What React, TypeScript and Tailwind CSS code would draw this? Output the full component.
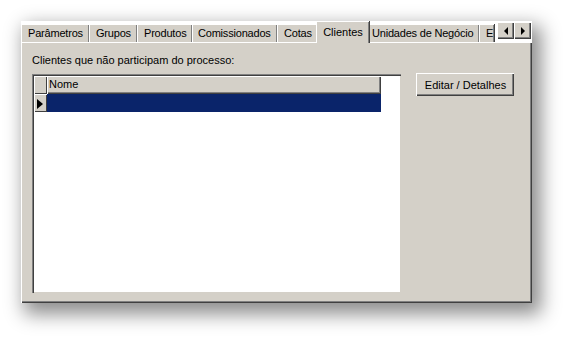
import React from "react";

const font = { fontFamily: '"Liberation Sans", Arial, sans-serif' };

function Tab({ label, w, active, pl = 6 }: { label: string; w: number; active?: boolean; pl?: number }) {
  if (active) {
    return (
      <div
        className="relative z-10 -mx-[2px] flex h-[22px] items-start justify-center border-l border-t border-white bg-[#d4d0c8] pt-[2px] shadow-[inset_-1px_0_0_#808080,1px_0_0_#404040]"
        style={{ width: w + 4 }}
      >
        {label}
      </div>
    );
  }
  return (
    <div
      className="mt-[3px] flex h-[18px] items-center overflow-hidden whitespace-nowrap border-l border-t border-white bg-[#d4d0c8] tracking-[-0.2px] shadow-[inset_-1px_0_0_#808080,1px_0_0_#404040]"
      style={{ width: w, paddingLeft: pl }}
    >
      {label}
    </div>
  );
}

function ArrowBtn({ dir }: { dir: "l" | "r" }) {
  return (
    <div className="flex h-[17px] w-[17px] items-center justify-center border-l border-t border-white bg-[#d4d0c8] shadow-[inset_-1px_-1px_0_#404040,inset_-2px_-2px_0_#808080]">
      <svg width="4" height="8" viewBox="0 0 4 8">
        {dir === "l" ? <path d="M4 0 L0 4 L4 8 Z" fill="#000" /> : <path d="M0 0 L4 4 L0 8 Z" fill="#000" />}
      </svg>
    </div>
  );
}

export default function App() {
  return (
    <div className="h-[346px] w-[574px] overflow-hidden bg-white pl-[21px] pt-[21px] text-[11px] text-black" style={font}>
      <div className="flex h-[282px] w-[511px] flex-col bg-[#d4d0c8] shadow-[6px_8px_18px_3px_rgba(0,0,0,0.45)]">
        {/* tab strip */}
        <div className="relative flex h-[21px] bg-white">
          <div className="flex h-[22px] items-start">
            <Tab label="Parâmetros" w={68} />
            <Tab label="Grupos" w={48} />
            <Tab label="Produtos" w={55} />
            <Tab label="Comissionados" w={85} pl={5} />
            <Tab label="Cotas" w={41} />
            <Tab label="Clientes" w={49} active />
            <Tab label="Unidades de Negócio" w={112} pl={4} />
            <Tab label="E" w={15} />
          </div>
          <div className="absolute right-[1px] top-[1px] z-20 flex">
            <ArrowBtn dir="l" />
            <ArrowBtn dir="r" />
          </div>
        </div>
        {/* panel */}
        <div className="flex flex-1 flex-col border-l border-t border-white shadow-[inset_-1px_-1px_0_#404040,inset_-2px_-2px_0_#808080]">
          <div className="flex">
            <div className="flex flex-col pl-[10px] pt-[10px]">
              <div className="h-[14px] leading-[14px]">Clientes que não participam do processo:</div>
              <div className="mt-[7px] flex h-[219px] w-[369px] flex-col border-l border-t border-[#808080] bg-white shadow-[inset_1px_1px_0_#404040,inset_-1px_-1px_0_#d4d0c8] pl-[1px] pt-[1px]">
                <div className="flex h-[18px]">
                  <div className="w-[13px] border-l border-t border-white bg-[#d4d0c8] shadow-[inset_-1px_-1px_0_#404040]" />
                  <div className="w-[334px] border-l border-t border-white bg-[#d4d0c8] pl-[1px] leading-[15px] shadow-[inset_-1px_-1px_0_#404040,inset_-2px_-2px_0_#808080]">
                    Nome
                  </div>
                </div>
                <div className="flex h-[18px]">
                  <div className="flex w-[13px] items-center justify-start border-l border-t border-white bg-[#d4d0c8] pl-[2px] shadow-[inset_-1px_-1px_0_#404040]">
                    <svg width="6" height="10" viewBox="0 0 6 10">
                      <path d="M0 0 L6 5 L0 10 Z" fill="#000" />
                    </svg>
                  </div>
                  <div className="w-[334px] bg-[#0a246a]" />
                </div>
              </div>
            </div>
            <div className="ml-[15px] pt-[30px]">
              <div className="flex h-[23px] w-[98px] items-center justify-center border-l border-t border-white bg-[#d4d0c8] shadow-[inset_-1px_-1px_0_#404040,inset_-2px_-2px_0_#808080]">
                Editar / Detalhes
              </div>
            </div>
          </div>
        </div>
      </div>
    </div>
  );
}
